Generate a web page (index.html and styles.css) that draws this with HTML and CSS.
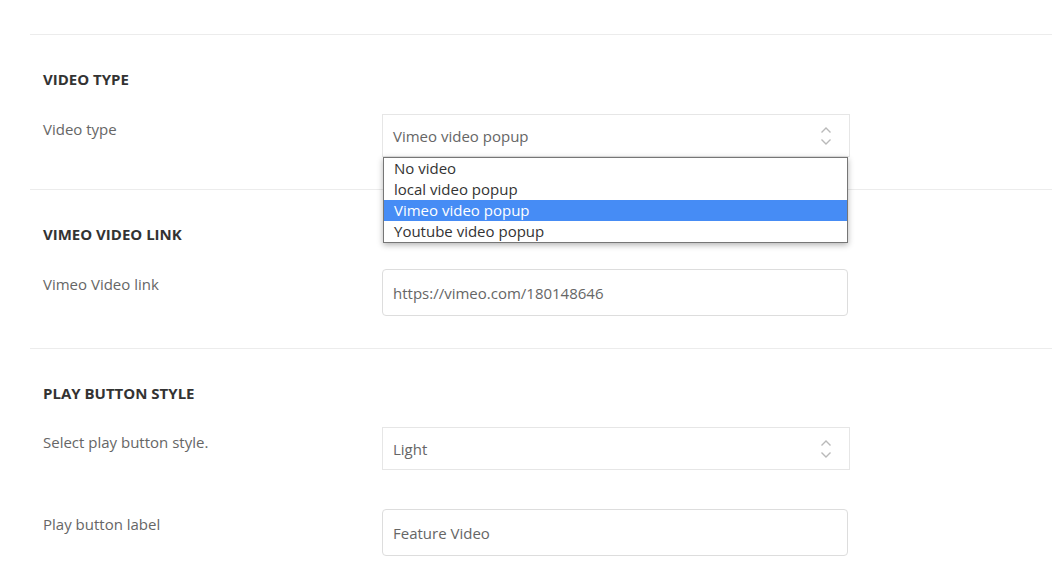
FILE: index.html
```html
<!DOCTYPE html>
<html>
<head>
  <title>Video Settings</title>
  <link rel="stylesheet" href="styles.css">
</head>
<body>

<div class="settings">

  <div class="section">
    <h3>Video type</h3>
    <div class="row">
      <label>Video type</label>
      <div class="field">
        <div class="select">
          <span>Vimeo video popup</span>
          <svg class="arrows" width="12" height="20" viewBox="0 0 12 20">
            <polyline points="1.5,6.5 6,2 10.5,6.5" />
            <polyline points="1.5,13.5 6,18 10.5,13.5" />
          </svg>
        </div>
        <!-- open option list -->
        <ul class="options">
          <li>No video</li>
          <li>local video popup</li>
          <li class="selected">Vimeo video popup</li>
          <li>Youtube video popup</li>
        </ul>
      </div>
    </div>
  </div>

  <div class="section">
    <h3>Vimeo video link</h3>
    <div class="row">
      <label>Vimeo Video link</label>
      <div class="field">
        <input class="input" type="text" value="https://vimeo.com/180148646">
      </div>
    </div>
  </div>

  <div class="section">
    <h3>Play button style</h3>
    <div class="row">
      <label>Select play button style.</label>
      <div class="field">
        <div class="select">
          <span>Light</span>
          <svg class="arrows" width="12" height="20" viewBox="0 0 12 20">
            <polyline points="1.5,6.5 6,2 10.5,6.5" />
            <polyline points="1.5,13.5 6,18 10.5,13.5" />
          </svg>
        </div>
      </div>
    </div>
    <div class="row">
      <label>Play button label</label>
      <div class="field">
        <input class="input" type="text" value="Feature Video">
      </div>
    </div>
  </div>

</div>

</body>
</html>
```

FILE: styles.css
```css
body {
  font-family: "Open Sans", Arial, sans-serif;
  background: #fff;
  margin: 0;
  color: #666;
}

.settings {
  padding-top: 34px;
  margin-left: 30px;
}

.section {
  border-top: 1px solid #ececec;
  padding: 34px 0 32px 13px;
}

h3 {
  margin: 0 0 25px;
  font-size: 15px;
  line-height: 20px;
  font-weight: 700;
  text-transform: uppercase;
  color: #333;
}

.section:last-child h3 {
  margin-bottom: 24px;
}

.row {
  display: grid;
  grid-template-columns: 339px 468px;
}

.row + .row {
  margin-top: 39px;
}

label {
  padding-top: 5px;
  font-size: 15px;
  line-height: 20px;
}

.field {
  position: relative;
}

.select {
  height: 43px;
  border: 1px solid #e6e6e6;
  box-sizing: border-box;
  display: flex;
  align-items: center;
  justify-content: space-between;
  padding: 0 17px 0 10px;
  font-size: 15px;
  color: #666;
}

.arrows {
  fill: none;
  stroke: #b9b9b9;
  stroke-width: 1.4;
}

.input {
  display: block;
  width: 466px;
  height: 47px;
  box-sizing: border-box;
  border: 1px solid #ddd;
  border-radius: 4px;
  padding: 0 10px;
  font-family: inherit;
  font-size: 15px;
  color: #666;
}

.options {
  position: absolute;
  top: 43px;
  left: 1px;
  width: 465px;
  box-sizing: border-box;
  margin: 0;
  padding: 0;
  list-style: none;
  background: #fff;
  border: 1px solid #767676;
  box-shadow: 0 2px 6px rgba(0, 0, 0, 0.3);
  font-size: 15px;
  color: #333;
}

.options li {
  height: 21px;
  line-height: 21px;
  padding-left: 10px;
}

.options .selected {
  background-color: #468cf5;
  color: #fff;
}
```
